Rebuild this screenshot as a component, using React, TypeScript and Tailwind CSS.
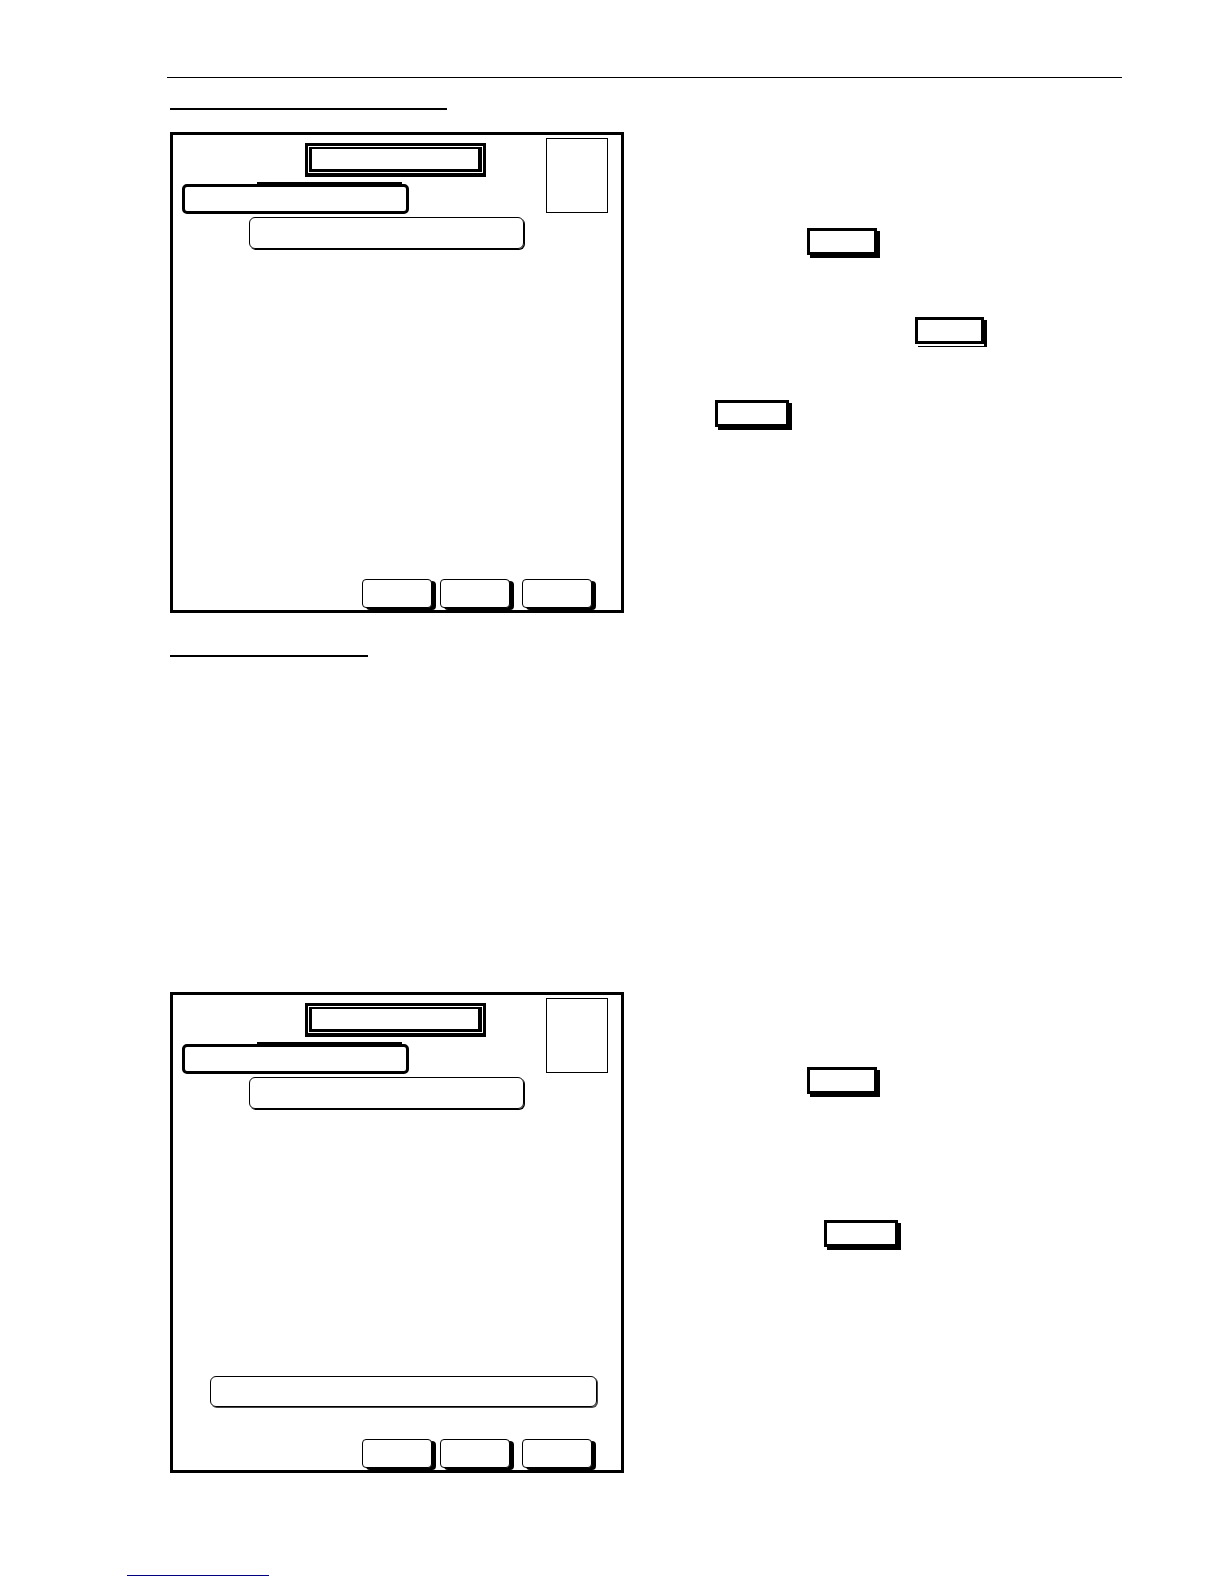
import React from "react";

function TitleBox() {
  return (
    <div className="ml-[132px] mt-[8px] h-[34px] w-[181px] border-[3px] border-b-4 border-black p-px">
      <div className="h-full w-full border-[3px] border-t-2 border-r-4 border-black bg-white" />
    </div>
  );
}

function NameBox() {
  return (
    <div className="relative ml-[9px] mt-[7px] h-[30px] w-[227px] rounded-[5px] border-[3px] border-black">
      <div className="absolute -top-[5px] left-[72px] right-[4px] h-[3px] bg-black" />
    </div>
  );
}

function FieldBox() {
  return <div className="ml-[76px] mt-[3px] h-[32px] w-[275px] rounded-[6px] border border-black shadow-[1px_1px_0_#000]" />;
}

function TopSection() {
  return (
    <div className="flex items-start">
      <div className="flex w-[373px] flex-col">
        <TitleBox />
        <NameBox />
        <FieldBox />
      </div>
      <div className="mt-[3px] h-[75px] w-[62px] border border-black" />
    </div>
  );
}

function Buttons() {
  return (
    <div className="flex items-start pl-[189px]">
      <div className="h-[29px] w-[70px] rounded-[4px] border border-black bg-white shadow-[4px_2px_0_#000]" />
      <div className="ml-[8px] h-[29px] w-[70px] rounded-[4px] border border-black bg-white shadow-[4px_2px_0_#000]" />
      <div className="ml-[12px] h-[29px] w-[70px] rounded-[4px] border border-black bg-white shadow-[4px_2px_0_#000]" />
    </div>
  );
}

function KeyBox({ className }: { className: string }) {
  return <div className={"h-[27px] border-[3px] border-black bg-white " + className} />;
}

export default function App() {
  return (
    <div className="min-h-[1584px] w-[1224px] bg-white font-['Liberation_Sans',sans-serif]">
      <div className="flex flex-col pt-[77px]">
        <div className="ml-[167px] h-px w-[955px] bg-black" />
        <div className="ml-[170px] mt-[30px] h-[2px] w-[277px] bg-black" />

        <div className="mt-[22px] flex items-start">
          <div className="ml-[170px] flex h-[481px] w-[454px] flex-col border-[3px] border-black pb-[2px]">
            <TopSection />
            <div className="flex-1" />
            <Buttons />
          </div>
          <div className="flex flex-col">
            <KeyBox className="ml-[183px] mt-[96px] w-[70px] shadow-[3px_3px_0_#000]" />
            <KeyBox className="ml-[291px] mt-[62px] w-[69px] shadow-[0_2px_0_#fff,3px_3px_0_#000]" />
            <KeyBox className="ml-[91px] mt-[56px] w-[74px] shadow-[3px_3px_0_#000]" />
          </div>
        </div>

        <div className="ml-[170px] mt-[42px] h-[2px] w-[198px] bg-black" />

        <div className="mt-[335px] flex items-start">
          <div className="ml-[170px] flex h-[481px] w-[454px] flex-col border-[3px] border-black pb-[2px]">
            <TopSection />
            <div className="flex-1" />
            <div className="ml-[37px] h-[31px] w-[387px] rounded-[6px] border border-black shadow-[1px_1px_0_#444]" />
            <div className="mt-[32px]">
              <Buttons />
            </div>
          </div>
          <div className="flex flex-col">
            <KeyBox className="ml-[183px] mt-[75px] w-[70px] shadow-[3px_3px_0_#000]" />
            <KeyBox className="ml-[200px] mt-[126px] w-[74px] shadow-[3px_3px_0_#000]" />
          </div>
        </div>

        <div className="ml-[127px] mt-[102px] h-px w-[142px] bg-[#000080]" />
      </div>
    </div>
  );
}
